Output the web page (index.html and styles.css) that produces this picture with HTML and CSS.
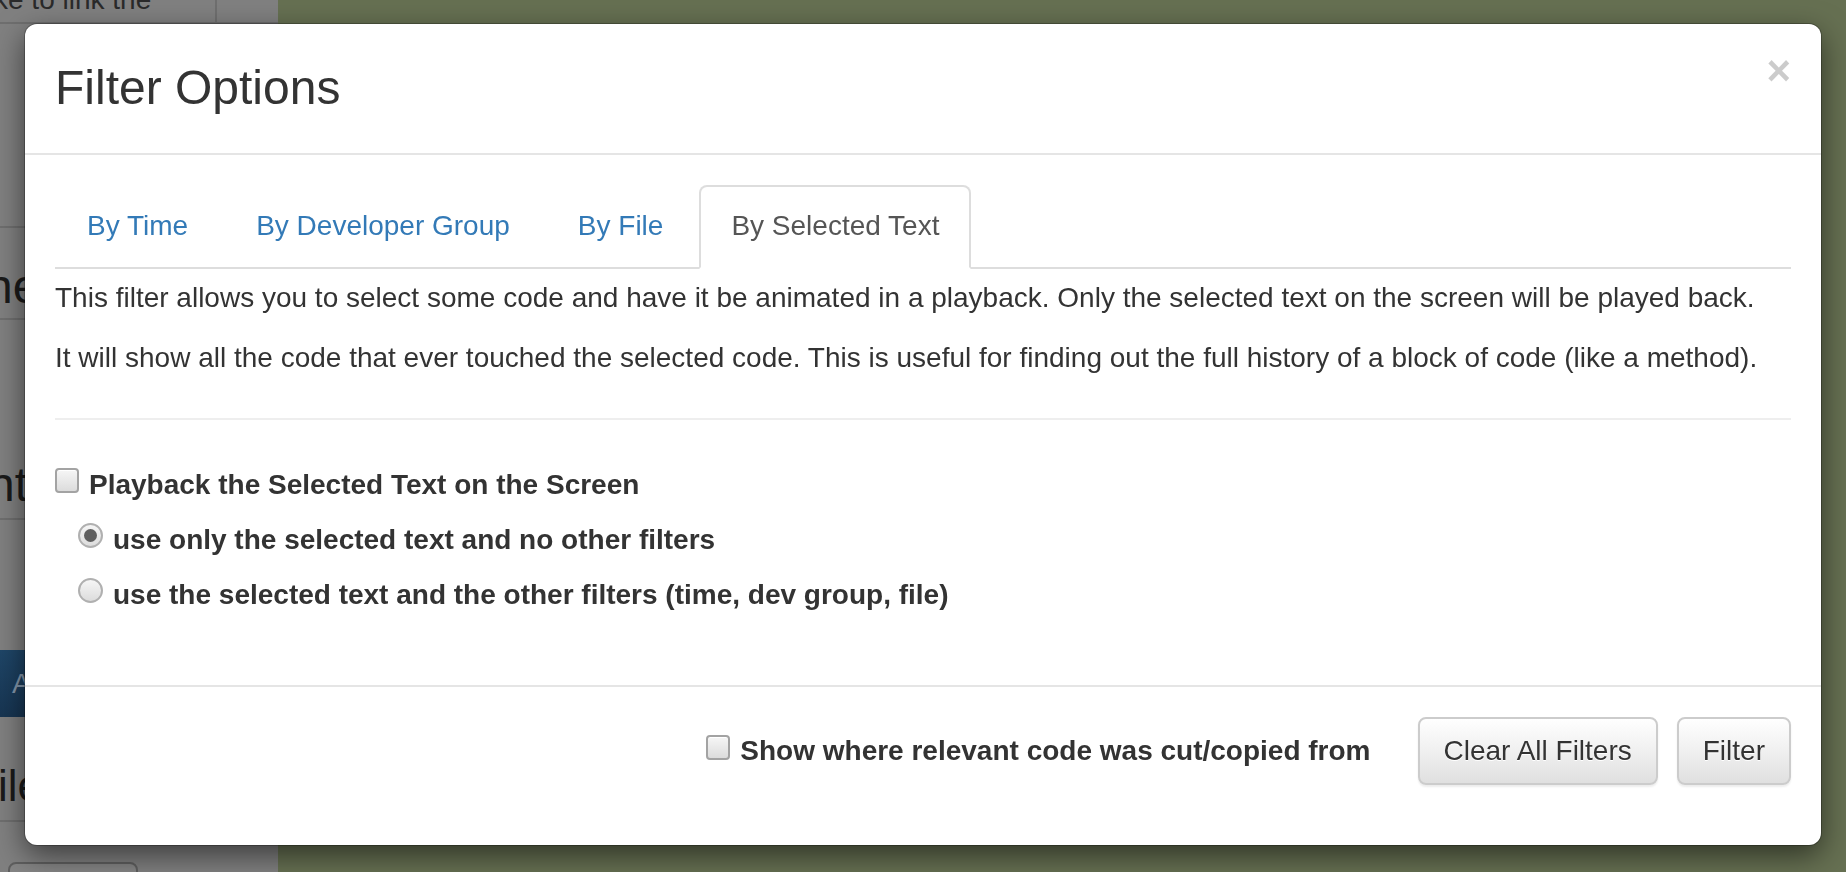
FILE: index.html
```html
<!DOCTYPE html>
<html lang="en">
<head>
<meta charset="utf-8">
<title>Filter Options</title>
<link rel="stylesheet" href="styles.css">
</head>
<body>
<div class="page">
  <aside class="side">
    <div class="s-top"><div class="s-cell"><span class="s-text s-t0">ke to link the</span></div></div>
    <div class="s-blank"></div>
    <div class="s-head s-ne"><span class="s-text s-t1">nes</span></div>
    <div class="s-head s-nt"><span class="s-text s-t2">nts</span></div>
    <div class="s-btn"><span>Add</span></div>
    <div class="s-head s-ile"><span class="s-text s-t3">iles</span></div>
    <div class="s-btn2"></div>
  </aside>
  <main class="stage"></main>
</div>

<div class="modal" role="dialog">
  <div class="modal-header">
    <h3 class="modal-title">Filter Options</h3>
    <button class="close" type="button">&times;</button>
  </div>
  <div class="modal-body">
    <ul class="nav-tabs">
      <li><a href="#">By Time</a></li>
      <li><a href="#">By Developer Group</a></li>
      <li><a href="#">By File</a></li>
      <li class="active"><a href="#">By Selected Text</a></li>
    </ul>
    <div class="tab-pane">
      <p>This filter allows you to select some code and have it be animated in a playback. Only the selected text on the screen will be played back.</p>
      <p>It will show all the code that ever touched the selected code. This is useful for finding out the full history of a block of code (like a method).</p>
      <hr class="divider">
      <div class="options">
        <label class="opt"><input type="checkbox" class="cb"><span>Playback the Selected Text on the Screen</span></label>
        <label class="opt opt-radio"><input type="radio" name="mode" class="rb" checked><span>use only the selected text and no other filters</span></label>
        <label class="opt opt-radio"><input type="radio" name="mode" class="rb"><span>use the selected text and the other filters (time, dev group, file)</span></label>
      </div>
    </div>
  </div>
  <div class="modal-footer">
    <label class="opt foot-opt"><input type="checkbox" class="cb"><span>Show where relevant code was cut/copied from</span></label>
    <button class="btn" type="button">Clear All Filters</button>
    <button class="btn btn-gap" type="button">Filter</button>
  </div>
</div>
</body>
</html>
```

FILE: styles.css
```css
* { box-sizing: border-box; }

html, body {
  margin: 0;
  padding: 0;
  width: 1846px;
  height: 872px;
  overflow: hidden;
  font-family: "Liberation Sans", Arial, sans-serif;
  font-size: 28px;
  color: #333;
}

.page {
  display: flex;
  width: 1846px;
  height: 872px;
}

/* page behind the backdrop */
.side {
  width: 278px;
  flex: none;
  background: #808080;
  display: flex;
  flex-direction: column;
  overflow: hidden;
  color: #1a1a1a;
}

.s-text { display: block; white-space: nowrap; }

.s-top {
  height: 24px;
  flex: none;
  border-bottom: 2px solid #6f6f6f;
  display: flex;
}

.s-cell {
  width: 217px;
  border-right: 2px solid #6f6f6f;
  overflow: hidden;
}

.s-t0 {
  font-size: 28px;
  line-height: 28px;
  margin-top: -14px;
  margin-left: -6px;
  color: #2a2a2a;
}

.s-blank {
  height: 204px;
  flex: none;
  border-bottom: 2px solid #6f6f6f;
}

.s-head {
  flex: none;
  border-bottom: 2px solid #6f6f6f;
  font-size: 48px;
  line-height: 60px;
}

.s-ne { height: 92px; padding-top: 29px; }
.s-t1 { margin-left: -14px; }

.s-nt { height: 200px; padding-top: 135px; }
.s-t2 { margin-left: -12px; }

.s-btn {
  flex: none;
  margin-top: 130px;
  width: 220px;
  height: 67px;
  background: linear-gradient(to bottom, #1f4668, #173552);
  color: #8497ab;
  font-size: 28px;
  line-height: 67px;
  padding-left: 12px;
}

.s-ile { height: 105px; padding-top: 39px; font-size: 44px; }
.s-t3 { margin-left: -2px; }

.s-btn2 {
  flex: none;
  margin-top: 40px;
  margin-left: 8px;
  width: 130px;
  height: 60px;
  border: 2px solid #5f5f5f;
  border-radius: 8px;
  background: #858585;
}

.stage {
  flex: 1;
  background: #667052;
}

/* modal */
.modal {
  position: fixed;
  left: 25px;
  top: 24px;
  width: 1796px;
  height: 821px;
  background: #fff;
  border-radius: 12px;
  box-shadow: 0 0 0 1px rgba(0, 0, 0, 0.25), 0 10px 30px rgba(0, 0, 0, 0.55);
  display: flex;
  flex-direction: column;
}

.modal-header {
  display: flex;
  justify-content: space-between;
  align-items: flex-start;
  padding: 30px;
  border-bottom: 2px solid #e5e5e5;
}

.modal-title {
  margin: 0;
  font-size: 48px;
  font-weight: normal;
  line-height: 68.57px;
  color: #333;
}

.close {
  margin-top: -4px;
  padding: 0;
  border: 0;
  background: transparent;
  font-family: "Liberation Sans", Arial, sans-serif;
  font-size: 42px;
  font-weight: bold;
  line-height: 1;
  color: #000;
  opacity: 0.2;
  cursor: pointer;
}

.modal-body {
  padding: 30px 30px 30px;
}

.nav-tabs {
  list-style: none;
  margin: 0;
  padding: 0;
  display: flex;
  border-bottom: 2px solid #ddd;
}

.nav-tabs li {
  margin-right: 4px;
  margin-bottom: -2px;
}

.nav-tabs a {
  display: block;
  padding: 19px 30px 21px;
  line-height: 40px;
  border: 2px solid transparent;
  border-radius: 8px 8px 0 0;
  color: #337ab7;
  text-decoration: none;
}

.nav-tabs .active a {
  color: #555;
  background: #fff;
  border-color: #ddd #ddd transparent;
}

.tab-pane {
  padding-top: 9px;
}

.tab-pane p {
  margin: 0 0 20px;
  line-height: 40px;
}

.divider {
  margin: 40px 0 0;
  border: 0;
  border-top: 2px solid #eee;
  height: 0;
}

.options {
  margin-top: 45px;
  margin-bottom: 40px;
  display: flex;
  flex-direction: column;
  gap: 15px;
}

.opt {
  display: flex;
  align-items: flex-start;
  font-weight: bold;
  line-height: 40px;
  color: #333;
}

.opt-radio { padding-left: 23px; }

.cb, .rb {
  appearance: none;
  -webkit-appearance: none;
  margin: 3px 10px 0 0;
  flex: none;
  background: linear-gradient(to bottom, #f6f6f6, #dcdcdc);
  border: 2px solid #a3a3a3;
}

.cb {
  width: 24px;
  height: 25px;
  border-radius: 4px;
  box-shadow: inset 0 1px 0 #fff;
}

.rb {
  width: 25px;
  height: 25px;
  border-radius: 50%;
  border-color: #b0b0b0;
  position: relative;
}

.rb:checked::after {
  content: "";
  position: absolute;
  left: 4px;
  top: 4px;
  width: 13px;
  height: 13px;
  border-radius: 50%;
  background: #5f5f5f;
}

.modal-footer {
  margin-top: auto;
  border-top: 2px solid #e5e5e5;
  padding: 30px 30px 60px;
  display: flex;
  justify-content: flex-end;
  align-items: center;
}

.foot-opt {
  margin-right: 47px;
}

.foot-opt .cb { margin-top: 4px; margin-right: 10px; }

.btn {
  font-family: "Liberation Sans", Arial, sans-serif;
  font-size: 28px;
  line-height: 40px;
  padding: 12px 24px;
  height: 68px;
  color: #333;
  border: 2px solid #ccc;
  border-radius: 8px;
  background: linear-gradient(to bottom, #fff 0, #e0e0e0 100%);
  text-shadow: 0 1px 0 #fff;
  box-shadow: inset 0 1px 0 rgba(255, 255, 255, 0.15), 0 2px 2px rgba(0, 0, 0, 0.075);
  cursor: pointer;
}

.btn-gap { margin-left: 19px; }
```
